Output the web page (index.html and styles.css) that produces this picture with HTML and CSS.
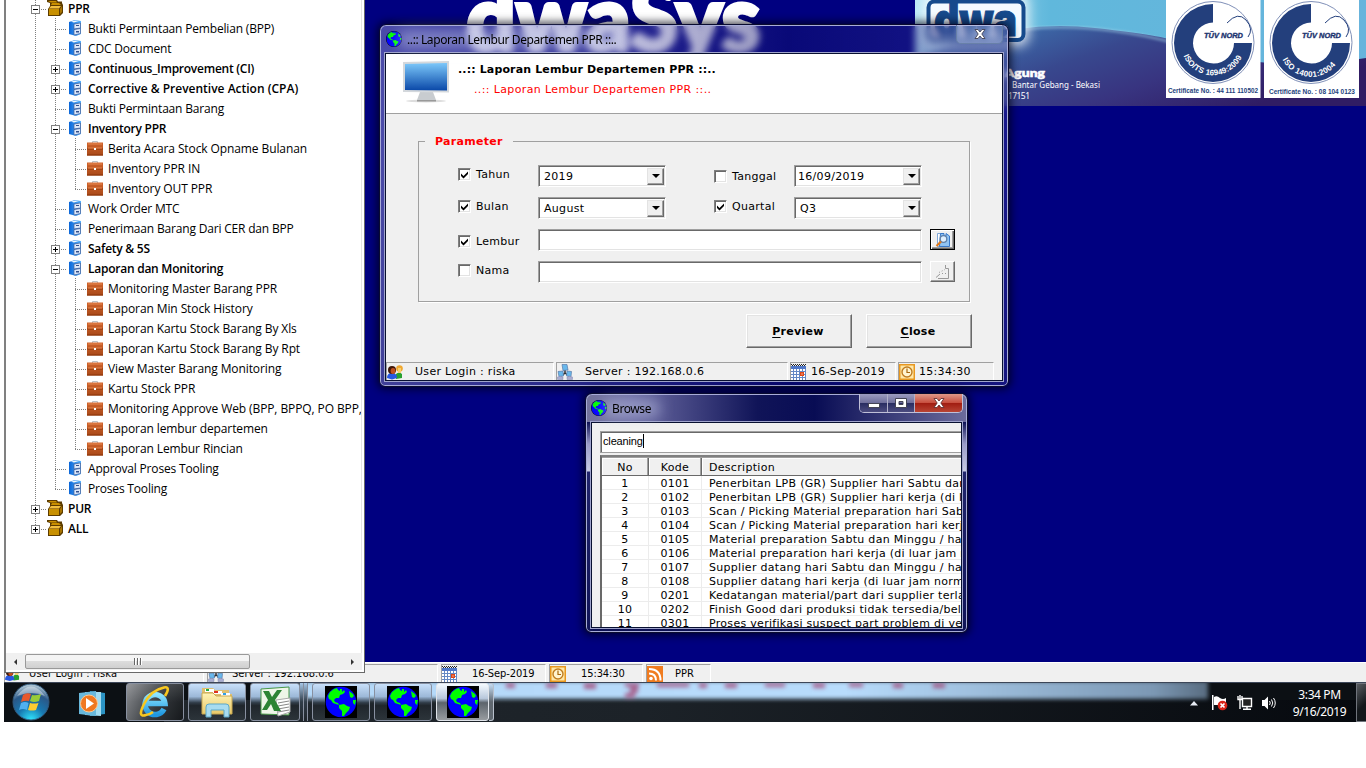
FILE: index.html
```html
<!DOCTYPE html>
<html lang="id">
<head>
<meta charset="utf-8">
<title>dwaSys</title>
<link rel="stylesheet" href="styles.css">
</head>
<body>
<svg class="defs" width="0" height="0">
  <defs>
    <linearGradient id="gBlue" x1="0" y1="0" x2="0" y2="1"><stop offset="0" stop-color="#7cc8fa"/><stop offset="1" stop-color="#0a48a8"/></linearGradient>
    <linearGradient id="gCab" x1="0" y1="0" x2="1" y2="0"><stop offset="0" stop-color="#0a66d8"/><stop offset="1" stop-color="#58b4ff"/></linearGradient>
    <linearGradient id="gCase" x1="0" y1="0" x2="0" y2="1"><stop offset="0" stop-color="#d0642c"/><stop offset="1" stop-color="#a84818"/></linearGradient>
    <radialGradient id="gOrb" cx=".5" cy="1" r=".95"><stop offset="0" stop-color="#30e8ff"/><stop offset=".4" stop-color="#1878b0"/><stop offset=".75" stop-color="#2a5888"/><stop offset="1" stop-color="#a8c0d0"/></radialGradient>
    <linearGradient id="gExp" x1="0" y1="0" x2="0" y2="1"><stop offset="0" stop-color="#fff4b8"/><stop offset="1" stop-color="#e8c868"/></linearGradient>
    <linearGradient id="gIe" x1="0" y1="0" x2="0" y2="1"><stop offset="0" stop-color="#8ce4ff"/><stop offset="1" stop-color="#2098e0"/></linearGradient>
  </defs>
  <symbol id="globe" viewBox="0 0 32 32">
    <circle cx="16" cy="16" r="15.3" fill="#0000ff"/>
    <path fill="#00ff00" d="M3 10 5 6 9 3 12 2 13 4 15 5 15 3 17 3 17 6 19 4 20 6 18 8 15 9 14 12 11 12 9 14 10 16 13 17 14 19 11 18 8 17 6 14 4 13Z"/>
    <path fill="#00ff00" d="M14 19 19 18 22 20 25 21 24 24 21 27 19 30 17 30 17 25 14 22ZM24 5 28 8 29 10 27 12 25 11ZM28 14 31 14 30 19 28 17Z"/>
  </symbol>
  <symbol id="folder" viewBox="0 0 16 16">
    <path fill="#5c3c00" d="M0 0H10L11 1.500H15V3L16 5V13L13 16H1V9L3 6V3L0 2Z"/>
    <path fill="#c89000" d="M1 1H9L10 2.500H4ZM2 9H12V15H2Z"/><path fill="#f0c040" d="M4 6H14L12 8.500H2Z"/><path fill="#a87400" d="M13 9 15 6V12L13 14Z"/><path fill="#c89000" d="M5 3H12L14 5H4Z"/>
  </symbol>
  <symbol id="cabinet" viewBox="0 0 13 16">
    <path fill="url(#gCab)" d="M0 2 6 0 12 1V14L7 16 0 14Z"/>
    <path fill="#dce8fa" stroke="#3c5c98" stroke-width=".7" d="M5 4 11.500 3V8L5 9ZM5 9.500 11.500 8.500V13.500L5 15Z"/>
    <path fill="#35508c" d="M7 5h3v1H7zM7 11h3v1.500H7z"/><path fill="#f4fbff" d="M2 1.800 6 .6 10 1 5 2.400Z"/>
  </symbol>
  <symbol id="case" viewBox="0 0 16 16">
    <path fill="none" stroke="#b8c0c8" d="M5.500 3V1.500h5V3"/>
    <rect y="2.500" width="16" height="13" fill="url(#gCase)"/><path fill="#8c3408" d="M0 8.500h16v1H0zM0 14.500h16v1H0z"/><path fill="#e88850" d="M1 3.500h14v1H1zM1 7.500h14v1H1z"/><path fill="#fff" d="M7 8h2v2H7z"/>
  </symbol>
  <symbol id="users" viewBox="0 0 16 16">
    <path fill="#28a030" d="M9 15V10Q12 7 15 10V14Z"/><circle cx="12.500" cy="4.500" r="3.300" fill="#f0a830"/><path fill="#f6d070" d="M11 4h3v5h-3z"/>
    <path fill="#2858e0" d="M0 14Q0 9 5 9T10 14L5 15.500Z"/><circle cx="5" cy="6" r="4" fill="#401808"/><ellipse cx="6" cy="7" rx="2.400" ry="3" fill="#c05020"/>
  </symbol>
  <symbol id="net" viewBox="0 0 16 16">
    <path fill="none" stroke="#333" stroke-width="1.500" d="M8 6V9L4 12M8 9L12 12"/><g fill="#68b8ec" stroke="#5878a8" stroke-width=".7"><path d="M5 .5 10 .5 11 6 6 6.500zM1 7.500 6 7 6.500 12 2 12.500zM10 7 14.500 7.500 14 12.500 9.500 12z"/></g><path fill="#a8acd0" stroke="#8088b0" stroke-width=".5" d="M.5 13Q3 11.500 6 13V15.500H.500zM10 13Q12 11.500 15.500 13V15.500H10z"/>
  </symbol>
  <symbol id="cal" viewBox="0 0 16 16">
    <path fill="#fff" d="M0 2h15v14H0z"/><path fill="#5078c8" d="M0 2h15v3H0z"/><path stroke="#222" stroke-dasharray="1 1" d="M0 .5h15M1 1.500h14"/>
    <path stroke="#6488c4" d="M0 7.500h15M0 10.500h15M0 13.500h15M2.500 5v11M5.500 5v11M8.500 5v11M11.500 5v11M14.500 5v11" fill="none"/><path fill="#e04818" d="M9 8h4v4H9z"/><path fill="#fff" d="M10.500 9.500h1v1h-1z"/>
  </symbol>
  <symbol id="clock" viewBox="0 0 16 16">
    <path fill="#e89820" d="M0 0h16v16H0z"/><path fill="#ffe8a8" d="M1.500 1.500h13v13h-13z"/><circle cx="8" cy="8" r="5" fill="#fff4d0" stroke="#c07c20" stroke-width="1.400"/><path fill="none" stroke="#a86810" stroke-width="1.200" d="M8 4.500V8.500H11"/>
  </symbol>
  <symbol id="rss" viewBox="0 0 16 16">
    <path fill="#f07c20" d="M0 0h16v16H0z"/><circle cx="4" cy="12.500" r="1.800" fill="#fff"/><path fill="none" stroke="#fff" stroke-width="2" d="M2 7.500Q9 7.500 9 14.500M2 3Q13.500 3 13.500 14.500"/>
  </symbol>
  <symbol id="tick" viewBox="0 0 9 9"><path d="M1 3.500V6L3.500 8.500 8 4V1.500L3.500 6Z" fill="#000"/></symbol>
</svg>

<main class="screen">
  <section class="workspace">
    <div class="wordmark">dwaSys</div>
    <div class="banner">
      <svg class="banner-art" width="451" height="106" viewBox="0 0 451 106">
        <defs>
          <linearGradient id="sky" x1="0" x2="1" y1="0" y2="0"><stop offset="0" stop-color="#b8e6f6"/><stop offset=".3" stop-color="#60b8dc"/><stop offset="1" stop-color="#68b4dc"/></linearGradient>
          <linearGradient id="hill" x1="0" x2="1" y1="0" y2=".5"><stop offset="0" stop-color="#6ca0cc"/><stop offset=".25" stop-color="#3c64a4"/><stop offset=".45" stop-color="#38488e"/><stop offset=".7" stop-color="#383480"/><stop offset="1" stop-color="#301c64"/></linearGradient>
          <filter id="soft" x="-20%" y="-40%" width="140%" height="180%"><feGaussianBlur stdDeviation="6"/></filter>
          <filter id="soft2"><feGaussianBlur stdDeviation="1.500"/></filter>
        </defs>
        <rect width="451" height="106" fill="url(#sky)"/>
        <path d="M0 60Q90 18 180 28T260 44Q350 75 451 58V106H0Z" fill="url(#hill)"/>
        <path d="M110 29Q180 22 260 43" fill="none" stroke="#a8d8ec" stroke-width="2" opacity=".7" filter="url(#soft2)"/>
        <rect x="8" y="-8" width="106" height="54" rx="10" fill="#fff" opacity=".8" filter="url(#soft)"/>
        <rect x="13.500" y="1.500" width="95" height="38.500" rx="6" fill="#f4faff" stroke="#164a8c" stroke-width="4"/>
        <text x="19" y="36" class="logo-text" textLength="83" lengthAdjust="spacingAndGlyphs">dwa</text>
        <text x="37" y="77" class="b-name" textLength="93" lengthAdjust="spacingAndGlyphs">Dharma Agung</text>
        <text x="97" y="87.500" class="b-addr" textLength="88" lengthAdjust="spacingAndGlyphs">Bantar Gebang - Bekasi</text>
        <text x="93" y="98.500" class="b-addr" textLength="22">17151</text>
        <g transform="translate(251 0)">
          <rect width="94.500" height="98" fill="#fff"/>
          <circle cx="47" cy="42.500" r="41" fill="none" stroke="#8090b8"/>
          <path fill="#233f7c" d="M47 4A39 39 0 1 0 86 43H68A20.500 20.500 0 1 1 47 22.500Z"/>
          <path fill="none" stroke="#233f7c" d="M61 23Q72 11 80 20T82 37"/>
          <text x="38" y="38" class="tuv" textLength="39" lengthAdjust="spacingAndGlyphs">TÜV NORD</text>
          <path id="arc1" fill="none" d="M16.500 53A32 32 0 0 0 77.500 53"/>
          <text class="iso"><textPath href="#arc1" startOffset="3" textLength="73">ISO/TS 16949:2009</textPath></text>
          <text x="2" y="92.500" class="certno" textLength="90" lengthAdjust="spacingAndGlyphs">Certificate No. : 44 111 110502</text>
        </g>
        <g transform="translate(349 0)">
          <rect width="95" height="98" fill="#fff"/>
          <circle cx="47" cy="42.500" r="41" fill="none" stroke="#8090b8"/>
          <path fill="#233f7c" d="M47 4A39 39 0 1 0 86 43H68A20.500 20.500 0 1 1 47 22.500Z"/>
          <path fill="none" stroke="#233f7c" d="M61 23Q72 11 80 20T82 37"/>
          <text x="38" y="38" class="tuv" textLength="39" lengthAdjust="spacingAndGlyphs">TÜV NORD</text>
          <path id="arc2" fill="none" d="M17 56A32 32 0 0 0 77 56"/>
          <text class="iso"><textPath href="#arc2" startOffset="4" textLength="63">ISO 14001:2004</textPath></text>
          <text x="5" y="93.500" class="certno" textLength="86" lengthAdjust="spacingAndGlyphs">Certificate No. : 08 104 0123</text>
        </g>
      </svg>
    </div>
  </section>

  <footer class="status main-status">
    <div class="cell"><svg width="15" height="16"><use href="#users"/></svg><span class="s-user">User Login : riska</span></div>
    <div class="cell"><svg width="16" height="16"><use href="#net"/></svg><span class="s-server">Server : 192.168.0.6</span></div>
    <div class="cell"><svg width="16" height="16"><use href="#cal"/></svg><span class="s-date">16-Sep-2019</span></div>
    <div class="cell"><svg width="16" height="16"><use href="#clock"/></svg><span class="s-time">15:34:30</span></div>
    <div class="cell"><svg width="16" height="16"><use href="#rss"/></svg><span class="s-dept">PPR</span></div>
  </footer>

  <footer class="taskbar">
    <div class="glow"></div>
    <svg class="ghost" width="460" height="20" viewBox="0 0 460 20"><g fill="#a03868"><path d="M3 0h9v5H3zM43 0h11v5H43zM81 0h12v6H81zM122 0h14v4H122zM127 4h8v6h-8zM122 10h10v5h-10zM154 0h32v4h-32zM196 0h8v5h-8zM222 0h12v5h-12zM262 0h8v4h-8zM270 0h12v4h-12zM310 0h12v5h-12zM346 0h14v4h-14zM390 0h10v5h-10zM430 0h12v5h-12z"/></g></svg>
    <svg class="orb" width="38" height="38" viewBox="0 0 38 38"><circle cx="19" cy="19" r="18" fill="url(#gOrb)" stroke="#30587c"/><path d="M5 13Q19 -6 33 13 20 7 5 13Z" fill="#fff" opacity=".4"/>
      <path fill="#e8582c" d="M11 12Q15 9 19 11L17 18Q13 17 9 19Z"/><path fill="#98cc38" d="M20 12Q24 13 29 11L27 18Q22 20 18 18Z"/><path fill="#50b0f0" d="M9 20Q13 18 16.500 20L15 27Q11 25 7 27Z"/><path fill="#fccc30" d="M18 20Q22 21 26.500 20L24 27Q20 28 16 27Z"/></svg>
    <svg class="wmp" width="27" height="26" viewBox="0 0 27 26"><path fill="#2c94c4" d="M11 0 26 2V23L11 25Z"/><path fill="#a4dcf0" d="M6 1 22 1V25L6 24Z"/><path fill="#68b8dc" d="M0 2 17 0V25L0 23Z"/><circle cx="10" cy="12.500" r="8.500" fill="#f07820" stroke="#ffc890"/><path fill="#fff" d="M7 7 15 12.500 7 18Z"/></svg>
    <div class="task t-ie"><svg width="32" height="32" viewBox="0 0 32 32"><path fill="none" stroke="url(#gIe)" stroke-width="5.500" d="M25 23A10 10 0 1 1 26 17.500H8"/><path fill="none" stroke="#f8c820" stroke-width="2.600" d="M26 10Q32 0 25 1.500 12 4 5 18T7 29Q10 29 14 26"/></svg></div>
    <div class="task t-exp"><svg width="32" height="32" viewBox="0 0 32 32"><path fill="#e0c070" d="M1 2H12L14 4H28V8H31V28H1Z"/><path fill="#fff" d="M4 3h9v3H4zM12 5h9v3h-9zM20 7h9v3h-9z"/><path fill="#20b040" d="M5 3h3v2H5z"/><path fill="#e03020" d="M13 5h4v2h-4z"/><path fill="#30a0e8" d="M22 7h3v2h-3z"/><path fill="url(#gExp)" stroke="#c8a850" d="M1 7H12L15 10H31V28H1Z"/><path fill="#a8dcf0" stroke="#5ca8c8" d="M5 31V21Q5 18 8 18H25Q28 18 28 21V31H23V24H10V31Z"/></svg></div>
    <div class="task t-xls"><svg width="31" height="31" viewBox="0 0 31 31"><path fill="#eef6e8" stroke="#489848" d="M1 3 29 1V29L1 28Z"/><path fill="#fff" stroke="#aaa" d="M16 14 30 12V26L18 30Z"/><path stroke="#888" d="M18 17 29 15M18 20 29 18M18 23 29 21M18 26 29 24"/><path fill="#2c8434" d="M3 5H9L12 11 17 4H22L15 14 21 25H14L11 18 7 24H2L8 14Z"/></svg></div>
    <div class="stack"><i></i><i></i></div>
    <div class="task t-g1"><svg class="sq" width="32" height="32"><use href="#globe"/></svg></div>
    <div class="task t-g2"><svg class="sq" width="32" height="32"><use href="#globe"/></svg></div>
    <div class="task active t-g3"><svg class="sq" width="32" height="32"><use href="#globe"/></svg></div>
    <div class="edge"></div>
    <div class="tray">
      <svg width="8" height="5"><path d="M4 0 8 4.500H0Z" fill="#e8ecf4"/></svg>
      <svg class="flag" width="16" height="16" viewBox="0 0 16 16"><path fill="#fff" d="M0 0h1.500v15H0zM2 2Q5 0 8 3 11 5 14 3V10H2Z"/><circle cx="10.500" cy="10.500" r="4.800" fill="#d82418"/><path stroke="#fff" stroke-width="1.700" d="M8.500 8.500l4 4M12.500 8.500l-4 4"/></svg>
      <svg class="lan" width="16" height="16" viewBox="0 0 16 16"><path fill="#222" stroke="#fff" stroke-width="1.400" d="M5.500 3.500H14.500V11.500H5.500Z"/><path stroke="#fff" stroke-width="1.400" fill="none" d="M1 1V4.500H5V1M3 0V14M6 14.200h8M10 12v2"/></svg>
      <svg class="vol" width="16" height="16" viewBox="0 0 16 16"><path fill="#fff" d="M1 5h2.500L7 1.500V14.500L3.500 11H1Z"/><path fill="none" stroke="#fff" d="M8.500 6Q10 8 8.500 10M10.500 4.500Q13 8 10.500 11.500M12.500 3Q16 8 12.500 13"/></svg>
      <div class="datetime"><span>3:34 PM</span><span>9/16/2019</span></div>
      <div class="show-desktop"></div>
    </div>
  </footer>

  <aside class="tree-panel">
    <div class="tree" id="tree"></div>
    <div class="hscroll"><span class="arrow left"></span><span class="thumb"><i></i><i></i><i></i></span><span class="arrow right"></span></div>
  </aside>

  <section class="win win-report">
    <header class="caption"><svg width="16" height="16" class="round"><use href="#globe"/></svg><span>..:: Laporan Lembur Departemen PPR ::..</span></header>
    <div class="lone-close"><svg width="12" height="10" viewBox="0 0 12 10"><path d="M1 .5H4L6 3 8 .5H11L7.800 5 11 9.500H8L6 7 4 9.500H1L4.200 5Z" fill="#fff" stroke="#445" stroke-width=".9"/></svg></div>
    <div class="client">
      <div class="head">
        <svg width="48" height="42" viewBox="0 0 48 42"><ellipse cx="23" cy="40" rx="20" ry="1.500" fill="#ddd"/><path fill="#c8ccd0" d="M17 31H30L33 39H14Z"/><path fill="#999" d="M14 39h19v1.500H14z"/><path fill="#d4d8dc" d="M0 1 46 0V31.500L0 31Z"/><path fill="url(#gBlue)" d="M2 3 44 2V29.500L2 29Z"/></svg>
        <div class="titles"><b>..:: Laporan Lembur Departemen PPR ::..</b><span>..:: Laporan Lembur Departemen PPR ::..</span></div>
      </div>
      <fieldset class="params">
        <legend>Parameter</legend>
        <div class="form">
          <label class="up1"><i class="cb"><svg width="9" height="9"><use href="#tick"/></svg></i>Tahun</label>
          <div class="combo"><span>2019</span><i class="drop"></i></div><div></div>
          <label><i class="cb"></i>Tanggal</label>
          <div class="combo date"><span>16/09/2019</span><i class="drop"></i></div><div></div><div></div>
          <label class="up1"><i class="cb"><svg width="9" height="9"><use href="#tick"/></svg></i>Bulan</label>
          <div class="combo"><span>August</span><i class="drop"></i></div><div></div>
          <label class="up1"><i class="cb"><svg width="9" height="9"><use href="#tick"/></svg></i>Quartal</label>
          <div class="combo"><span>Q3</span><i class="drop"></i></div><div></div><div></div>
          <label class="dn1"><i class="cb"><svg width="9" height="9"><use href="#tick"/></svg></i>Lembur</label>
          <div class="field"></div><div></div>
          <div class="pick focus"><svg width="16" height="16" viewBox="0 0 16 16"><path fill="#fff" stroke="#80a8d8" d="M2.500 1.500H7V14.500H2.500Z"/><path fill="#90c4f4" stroke="#3878c8" d="M5.500 1.500H9V4H11V1.500L14.500 4V14.500H4.500Z"/><circle cx="8.500" cy="7" r="3.300" fill="#e0f0ff" stroke="#6080a8" stroke-width="1.300"/><path stroke="#e07818" stroke-width="2.200" d="M6 9.500 1.500 14"/></svg></div>
          <label class="up2"><i class="cb"></i>Nama</label>
          <div class="field"></div><div></div>
          <div class="pick"><svg width="16" height="16" viewBox="0 0 16 16"><path fill="none" stroke="#999" d="M10.500 1V4.500H13.500V14.500H3M1 13.500 5 10"/><path stroke="#999" stroke-dasharray="1 2" d="M4 8.500 10 5.500M7 9.500h4"/></svg></div>
        </div>
      </fieldset>
      <div class="actions"><div class="btn"><span><u>P</u>review</span></div><div class="btn"><span><u>C</u>lose</span></div></div>
      <div class="status win-status">
        <div class="cell"><svg width="16" height="16"><use href="#users"/></svg><span>User Login : riska</span></div>
        <div class="cell"><svg width="16" height="16"><use href="#net"/></svg><span>Server : 192.168.0.6</span></div>
        <div class="cell"><svg width="16" height="16"><use href="#cal"/></svg><span>16-Sep-2019</span></div>
        <div class="cell"><svg width="16" height="16"><use href="#clock"/></svg><span>15:34:30</span></div>
      </div>
    </div>
  </section>

  <section class="win win-browse">
    <header class="caption"><svg width="16" height="16" class="round"><use href="#globe"/></svg><span>Browse</span></header>
    <div class="winbtns">
      <i><svg width="12" height="5"><rect x=".5" y=".5" width="11" height="4" fill="#fff" stroke="#445"/></svg></i>
      <i><svg width="12" height="10"><path fill="#fff" stroke="#445" fill-rule="evenodd" d="M.5.500h11v9H.500zM4 3.500v3h4v-3z"/></svg></i>
      <i class="x"><svg width="12" height="10" viewBox="0 0 12 10"><path d="M1 .5H4L6 3 8 .5H11L7.800 5 11 9.500H8L6 7 4 9.500H1L4.200 5Z" fill="#fff" stroke="#633" stroke-width=".9"/></svg></i>
    </div>
    <div class="client">
      <div class="search"><span>cleaning</span></div>
      <div class="grid">
        <div class="grid-head"><span>No</span><span>Kode</span><span>Description</span></div>
        <div id="rows"></div>
      </div>
    </div>
  </section>
</main>
<script src="app.js"></script>
</body>
</html>
```
FILE: styles.css
```css
* { box-sizing: border-box; }
body { margin: 0; background: #fff; width: 1366px; height: 768px; overflow: hidden; font: 11px "DejaVu Sans", sans-serif; color: #000; }
.defs { position: absolute; }
svg { display: block; flex: none; }
.screen { position: relative; width: 1362px; margin-left: 4px; height: 722px; overflow: hidden; }

.workspace { position: relative; height: 662px; background: #000080; overflow: hidden; }
.wordmark { position: absolute; left: 462px; top: -44px; font: 900 91px/120px "Lato", sans-serif; color: #fff; transform: scaleX(.96); transform-origin: 0 0; white-space: nowrap; -webkit-text-stroke: 4px #fff; }
.banner { position: absolute; left: 911px; top: 0; }
.logo-text { font: 900 46px "Inter", sans-serif; fill: #164a8c; stroke: #164a8c; stroke-width: 1px; }
.b-name { font: 900 12px "Lato", sans-serif; fill: #fff; stroke: #fff; stroke-width: .6px; }
.b-addr { font: 8.5px "Noto Sans", sans-serif; fill: #fff; }
.tuv { font: italic 900 8px "Liberation Sans", sans-serif; fill: #1c3470; stroke: #1c3470; stroke-width: .4px; }
.iso { font: bold 8px "Liberation Sans", sans-serif; fill: #fff; }
.certno { font: bold 6.5px "Liberation Sans", sans-serif; fill: #233f7c; }

.status { display: flex; background: #f0f0f0; }
.status .cell { display: flex; align-items: center; border-top: 1px solid #a0a0a0; border-left: 1px solid #a0a0a0; border-right: 1px solid #fff; white-space: nowrap; }
.main-status { height: 20px; padding-top: 1px; border-top: 1px solid #fff; gap: 3px; font-family: "DejaVu Sans Condensed", "DejaVu Sans", sans-serif; font-stretch: condensed; }
.main-status .cell { height: 18px; }
.main-status .cell:nth-child(1) { width: 200px; }
.main-status .cell:nth-child(2) { width: 231px; }
.main-status .cell:nth-child(3) { width: 105px; }
.main-status .cell:nth-child(4) { width: 94px; }
.main-status .cell:nth-child(5) { width: 65px; }
.s-user { margin-left: 9px; letter-spacing: .15px; }
.s-server { margin-left: 8px; }
.s-date { margin-left: 14px; letter-spacing: -.1px; }
.s-time { margin-left: 15px; letter-spacing: -.1px; }
.s-dept { margin-left: 12px; }

.taskbar { position: relative; height: 40px; display: flex; align-items: flex-start; background: #0c1014; overflow: hidden; border-top: 1px solid #3c4658; }
.glow { position: absolute; left: 296px; width: 908px; top: -2px; height: 18px; background: linear-gradient(90deg, #b4d8f8, #b8dcfc 60%, #7c98b4 94%, #586c80); filter: blur(2px); }
.taskbar::before { content: ""; position: absolute; inset: 17px 0 0 160px; background: linear-gradient(90deg, #20262c, #1c2228 40%, #06090e); }
.ghost { position: absolute; left: 499px; top: 0; opacity: .7; filter: blur(2px); }
.orb { position: relative; margin: 0 0 0 8px; }
.wmp { position: relative; margin: 8px 0 0 29px; }
.task { position: relative; width: 58px; height: 38px; margin: 0 4px 0 0; display: flex; justify-content: center; padding-top: 3px; border: 1px solid #8890a0; border-radius: 3px; background: linear-gradient(180deg, #c8e0fa, #9cb8d8 35%, #303c48 52%, #20262c 60%, #2c343a); }
.t-ie { margin-left: 20px; background: linear-gradient(180deg, rgba(255,255,255,.1), transparent 50%), linear-gradient(115deg, #8a8c90, #34383c 55%, #16191c); }
.t-ie svg, .t-exp svg, .t-xls svg { margin-top: -1px; }
.t-xls { width: 50px; margin-right: 0; }
.stack { position: relative; display: flex; width: 12px; height: 38px; }
.stack i { width: 4px; height: 38px; border-right: 1px solid #8890a0; background: linear-gradient(180deg, #a8c8e8, #303c48 50%, #20262c); }
.task.active { width: 53px; margin-right: 0; background: linear-gradient(180deg, #f4faff, #b8c8dc 40%, #5c646c 52%, #989ca0); border-color: #e0e4ea; }
.edge { position: relative; width: 5px; height: 38px; border: 1px solid #b8c0cc; border-left: 0; border-radius: 0 3px 3px 0; background: linear-gradient(180deg, #c4dcf4, #606870 50%); }
.sq { background: #000; margin-top: -1px; }
.tray { position: relative; margin-left: auto; display: flex; height: 39px; color: #fff; }
.tray > svg:first-child { margin: 18px 14px 0 0; }
.flag { margin: 12px 9px 0 0; }
.lan { margin: 12px 8px 0 0; }
.vol { margin: 12px 7px 0 0; }
.datetime { width: 71px; margin-right: 1px; display: flex; flex-direction: column; align-items: center; font: 12px/17px "Noto Sans", sans-serif; letter-spacing: -.4px; padding-top: 3px; }
.show-desktop { width: 10px; border: 1px solid #70747c; border-right: 0; background: linear-gradient(135deg, #585c60, #14181c 60%); }

.tree-panel { position: absolute; left: 0; top: -2px; width: 361px; height: 675px; background: #fff; border: solid #696969; border-width: 0 1px 1px 2px; border-left-color: #808080; display: flex; flex-direction: column; }
.tree { flex: 1; padding-left: 19px; margin-right: 2px; border-right: 1px solid #e3e3e3; overflow: hidden; font: 12px "Open Sans", sans-serif; }
.row { display: flex; height: 20px; align-items: center; white-space: nowrap; letter-spacing: -.1px; }
.row.l1 { letter-spacing: -.18px; }
.row.b { font-weight: 600; letter-spacing: -.25px; }
.row.wide { letter-spacing: 0; }
.g { position: relative; width: 20px; height: 20px; flex: none; }
.g.v, .g.t { background: repeating-linear-gradient(180deg, #808080 0 1px, transparent 1px 2px) 10px 0 / 1px 100% no-repeat; }
.g.l { background: repeating-linear-gradient(180deg, #808080 0 1px, transparent 1px 2px) 10px 0 / 1px 11px no-repeat; }
.g.t::before, .g.l::before { content: ""; position: absolute; left: 10px; top: 11px; width: 11px; height: 1px; background: repeating-linear-gradient(90deg, #808080 0 1px, transparent 1px 2px); }
.box { position: absolute; left: 6px; top: 7px; width: 9px; height: 9px; border: 1px solid #808080; background: linear-gradient(#000, #000) 1px 3px / 5px 1px no-repeat, #fff; }
.box.plus { background: linear-gradient(#000, #000) 1px 3px / 5px 1px no-repeat, linear-gradient(#000, #000) 3px 1px / 1px 5px no-repeat, #fff; }
.ico { width: 23px; display: flex; flex: none; padding-left: 2px; }
.ico.c { padding-left: 4px; }
.hscroll { height: 17px; margin-right: 2px; margin-bottom: 2px; display: flex; align-items: center; background: #f0f0f0; }
.arrow { width: 19px; display: flex; justify-content: center; }
.arrow::after { content: ""; border: 3.5px solid transparent; }
.arrow.left::after { border-right-color: #333; border-left: 0; }
.arrow.right { margin-left: auto; }
.arrow.right::after { border-left-color: #333; border-right: 0; }
.thumb { width: 225px; height: 15px; border: 1px solid #999; border-radius: 2px; background: linear-gradient(180deg, #f4f4f4 45%, #dcdcdc 50%, #d0d0d0); display: flex; gap: 1px; justify-content: center; align-items: center; }
.thumb i { width: 2px; height: 7px; background: #666; border-right: 1px solid #fff; }

.win { position: absolute; border: 1px solid #0a0c30; border-radius: 7px 7px 6px 6px; box-shadow: inset 0 0 0 1px #a8acd8, 0 0 9px 2px rgba(0,0,16,.75); overflow: visible; letter-spacing: .3px; }
.client { background: #f0f0f0; border: 1px solid #081030; outline: 1px solid #a0a4cc; overflow: hidden; }
.caption { display: flex; align-items: center; height: 28px; gap: 5px; font: 12px "Noto Sans", sans-serif; letter-spacing: -.4px; white-space: nowrap; }
.caption span { position: relative; isolation: isolate; }
.caption span::before { content: ""; position: absolute; z-index: -1; inset: 0 -8px; background: rgba(200,205,235,.5); filter: blur(7px); }
.round { border-radius: 50%; background: #000; }
.win-report { left: 375px; top: 24px; width: 630px; height: 363px; padding: 0 5px; backdrop-filter: blur(3.5px); background: linear-gradient(180deg, transparent 30%, rgba(0,0,60,.15)), linear-gradient(90deg, rgba(150,150,210,.5), rgba(90,90,170,.4) 40%, rgba(20,20,110,.45) 65%, rgba(70,70,160,.35)); }
.win-report .client { width: 618px; height: 328px; display: flex; flex-direction: column; }
.win-report .caption { padding-left: 1px; }
.lone-close { position: absolute; right: 5px; top: 0; width: 47px; height: 19px; border: 1px solid #6880a8; border-top: 0; border-radius: 0 0 5px 5px; background: rgba(220,235,255,.25); display: flex; justify-content: center; padding-top: 4px; }
.head { height: 60px; background: #fff; border-bottom: 1px solid #a0a0a0; display: flex; padding: 7px 0 0 17px; }
.titles { margin-left: 7px; display: flex; flex-direction: column; line-height: 20px; margin-top: -1px; white-space: nowrap; }
.titles b { letter-spacing: .14px; }
.titles span { margin-left: 16px; color: #f00; letter-spacing: .37px; }
.params { margin: 21px 0 0 32px; padding: 0; width: 552px; height: 167px; border: 1px solid #a0a0a0; box-shadow: 1px 1px 0 #fff; min-width: 0; }
.params legend { margin-left: 6px; padding: 0 10px; color: #f00; font-weight: bold; line-height: 13px; }
.form { display: grid; grid-template-columns: 80px 128px 48px 80px 128px 8px 25px; grid-auto-rows: 21px; row-gap: 11px; margin: 17px 0 0 39px; }
.form label { display: flex; align-items: center; gap: 5px; height: 21px; }
.form .up1 { margin-top: -1px; } .form .up2 { margin-top: -1px; } .form .dn1 { margin-top: 2px; } .form label { margin-top: 1px; }
.cb { width: 13px; height: 13px; border: 1px solid; border-color: #808080 #fff #fff #808080; box-shadow: inset 1px 1px #696969, inset -1px -1px #e3e3e3; background: #fff; display: flex; align-items: center; justify-content: center; }
.combo, .field { background: #fff; border: 1px solid; border-color: #a0a0a0 #fff #fff #a0a0a0; box-shadow: inset 1px 1px #696969, inset -1px -1px #e3e3e3; height: 22px; }
.combo { display: flex; align-items: center; justify-content: space-between; padding: 2px 1px 2px 5px; }
.combo.date { padding-left: 3px; }
.field { grid-column: span 4; }
.drop { width: 17px; height: 17px; background: #f0f0f0; border: 1px solid; border-color: #e3e3e3 #696969 #696969 #e3e3e3; box-shadow: inset -1px -1px #a0a0a0; display: flex; justify-content: center; align-items: center; }
.drop::after { content: ""; border: 4px solid transparent; border-top-color: #000; border-bottom: 0; }
.pick { height: 21px; width: 25px; background: #f0f0f0; border: 1px solid; border-color: #fff #696969 #696969 #fff; box-shadow: inset -1px -1px #a0a0a0; display: flex; align-items: center; justify-content: center; }
.pick.focus { border-color: #000; box-shadow: inset 1px 1px #fff, inset -1px -1px #696969, inset -2px -2px #a0a0a0; }
.actions { display: flex; gap: 14px; margin: 12px 0 0 360px; }
.btn { width: 106px; height: 34px; display: flex; align-items: center; justify-content: center; font-weight: bold; border: 1px solid; border-color: #fff #696969 #696969 #fff; box-shadow: inset -1px -1px #a0a0a0, inset 1px 1px #e3e3e3; background: #f0f0f0; padding-right: 2px; }
.btn u { text-decoration-thickness: 1px; text-underline-offset: 2px; }
.win-status { gap: 2px; margin-top: auto; height: 18px; }
.win-status .cell:nth-child(1) { width: 168px; } .win-status .cell:nth-child(1) span { margin-left: 12px; }
.win-status .cell:nth-child(2) { width: 232px; } .win-status .cell:nth-child(2) span { margin-left: 12px; }
.win-status .cell:nth-child(3) { width: 106px; } .win-status .cell:nth-child(3) span { margin-left: 4px; }
.win-status .cell:nth-child(4) { width: 96px; } .win-status .cell:nth-child(4) span { margin-left: 4px; }

.win-browse { left: 581px; top: 393px; width: 383px; height: 240px; padding: 0 5px; background: linear-gradient(180deg, rgba(180,185,220,0) 0 28px, #9a9cc8 50px, #c8cce4 77px, #20246c 78px, #101458 100%) left / 7px 100% no-repeat, linear-gradient(180deg, transparent 0 28px, #9a9cc8 50px, #c8cce4 77px, #20246c 78px, #101458 100%) right / 6px 100% no-repeat, linear-gradient(90deg, #74749c, #6c6ca4 12%, #101458 45%, #080c54 60%, #6c6c9c) top / 100% 28px no-repeat, #0c1054; }
.win-browse .client { width: 371px; height: 206px; padding: 8px 0 0 8px; }
.winbtns { position: absolute; right: 4px; top: 0; height: 19px; display: flex; border: 1px solid #c0c0d8; border-top: 0; border-radius: 0 0 5px 5px; overflow: hidden; }
.winbtns i { width: 28px; display: flex; justify-content: center; align-items: center; background: linear-gradient(180deg, #9c9cc0, #70709c 48%, #282c60 50%, #4c4c80); border-right: 1px solid #b0b0c8; }
.winbtns i:nth-child(2) { width: 27px; }
.winbtns i:first-child { padding-top: 5px; }
.winbtns .x { width: 47px; border: 0; background: linear-gradient(180deg, #e09888, #c85040 48%, #a01c10 50%, #b84434); }
.search { height: 22px; width: 400px; background: #fff; border: 1px solid #a0a0a0; box-shadow: inset 1px 1px #696969; padding: 1px 0 0 2px; font: 11px/16px "Liberation Sans", sans-serif; }
.search span { border-right: 1px solid #000; padding: 1px 0; letter-spacing: -.15px; }
.grid { margin-top: 2px; width: 400px; height: 220px; border: 2px solid #696969; border-top-color: #808080; background: #fff; box-shadow: inset 0 1px #a0a0a0; padding-top: 1px; }
.grid-head, .grid-row { display: grid; grid-template-columns: 47px 53px 280px; white-space: nowrap; }
.grid-head { height: 18px; line-height: 19px; background: #f0f0f0; border-bottom: 1px solid #696969; }
.grid-head span { border-right: 1px solid #696969; box-shadow: inset -1px 0 #a0a0a0, inset 1px 1px #fff; height: 17px; }
.grid-head span, .grid-row span { text-align: center; }
.grid-head span:last-child, .grid-row span:last-child { text-align: left; padding-left: 7px; }
.grid-row { height: 14px; line-height: 16px; }
.grid-row span { border-right: 1px solid #ececec; border-bottom: 1px solid #ececec; height: 14px; }
```
FILE: app.js
```js
// [level, marker, icon, label, bold, last, wide]; marker: + / - expander, t / l branch
const nodes = [
  [0, '-', 'folder', 'PPR', 1],
  [1, 't', 'cabinet', 'Bukti Permintaan Pembelian (BPP)'],
  [1, 't', 'cabinet', 'CDC Document'],
  [1, '+', 'cabinet', 'Continuous_Improvement (CI)', 1],
  [1, '+', 'cabinet', 'Corrective & Preventive Action (CPA)', 1, 0, 1],
  [1, 't', 'cabinet', 'Bukti Permintaan Barang'],
  [1, '-', 'cabinet', 'Inventory PPR', 1],
  [2, 't', 'case', 'Berita Acara Stock Opname Bulanan'],
  [2, 't', 'case', 'Inventory PPR IN'],
  [2, 'l', 'case', 'Inventory OUT PPR'],
  [1, 't', 'cabinet', 'Work Order MTC'],
  [1, 't', 'cabinet', 'Penerimaan Barang Dari CER dan BPP'],
  [1, '+', 'cabinet', 'Safety & 5S', 1],
  [1, '-', 'cabinet', 'Laporan dan Monitoring', 1],
  [2, 't', 'case', 'Monitoring Master Barang PPR'],
  [2, 't', 'case', 'Laporan Min Stock History'],
  [2, 't', 'case', 'Laporan Kartu Stock Barang By Xls'],
  [2, 't', 'case', 'Laporan Kartu Stock Barang By Rpt'],
  [2, 't', 'case', 'View Master Barang Monitoring'],
  [2, 't', 'case', 'Kartu Stock PPR'],
  [2, 't', 'case', 'Monitoring Approve Web (BPP, BPPQ, PO BPP,'],
  [2, 't', 'case', 'Laporan lembur departemen'],
  [2, 'l', 'case', 'Laporan Lembur Rincian'],
  [1, 't', 'cabinet', 'Approval Proses Tooling'],
  [1, 'l', 'cabinet', 'Proses Tooling'],
  [0, '+', 'folder', 'PUR', 1],
  [0, '+', 'folder', 'ALL', 1, 1]
];
document.getElementById('tree').innerHTML = nodes.map(([level, mark, icon, label, bold, last, wide]) => {
  const guides = '<i class="g v"></i>'.repeat(level);
  const expander = mark === '+' || mark === '-';
  const cell = expander
    ? `<i class="g ${last ? 'l' : 't'}"><i class="box ${mark === '+' ? 'plus' : ''}"></i></i>`
    : `<i class="g ${mark}"></i>`;
  const w = icon === 'cabinet' ? 13 : 16;
  return `<div class="row l${level} ${bold ? 'b' : ''} ${wide ? 'wide' : ''}">${guides}${cell}<span class="ico ${w === 13 ? 'c' : ''}"><svg width="${w}" height="16"><use href="#${icon}"/></svg></span><span>${label.replace('&', '&amp;')}</span></div>`;
}).join('');

const items = [
  ['0101', 'Penerbitan LPB (GR) Supplier hari Sabtu dan Minggu'],
  ['0102', 'Penerbitan LPB (GR) Supplier hari kerja (di luar jam'],
  ['0103', 'Scan / Picking Material preparation hari Sabtu'],
  ['0104', 'Scan / Picking Material preparation hari kerja'],
  ['0105', 'Material preparation Sabtu dan Minggu / hari libur'],
  ['0106', 'Material preparation hari kerja (di luar jam normal)'],
  ['0107', 'Supplier datang hari Sabtu dan Minggu / hari libur'],
  ['0108', 'Supplier datang hari kerja (di luar jam normal)'],
  ['0201', 'Kedatangan material/part dari supplier terlambat'],
  ['0202', 'Finish Good dari produksi tidak tersedia/belum'],
  ['0301', 'Proses verifikasi suspect part problem di vendor']
];
document.getElementById('rows').innerHTML = items.map(([code, text], i) =>
  `<div class="grid-row"><span>${i + 1}</span><span>${code}</span><span>${text}</span></div>`).join('');
```
